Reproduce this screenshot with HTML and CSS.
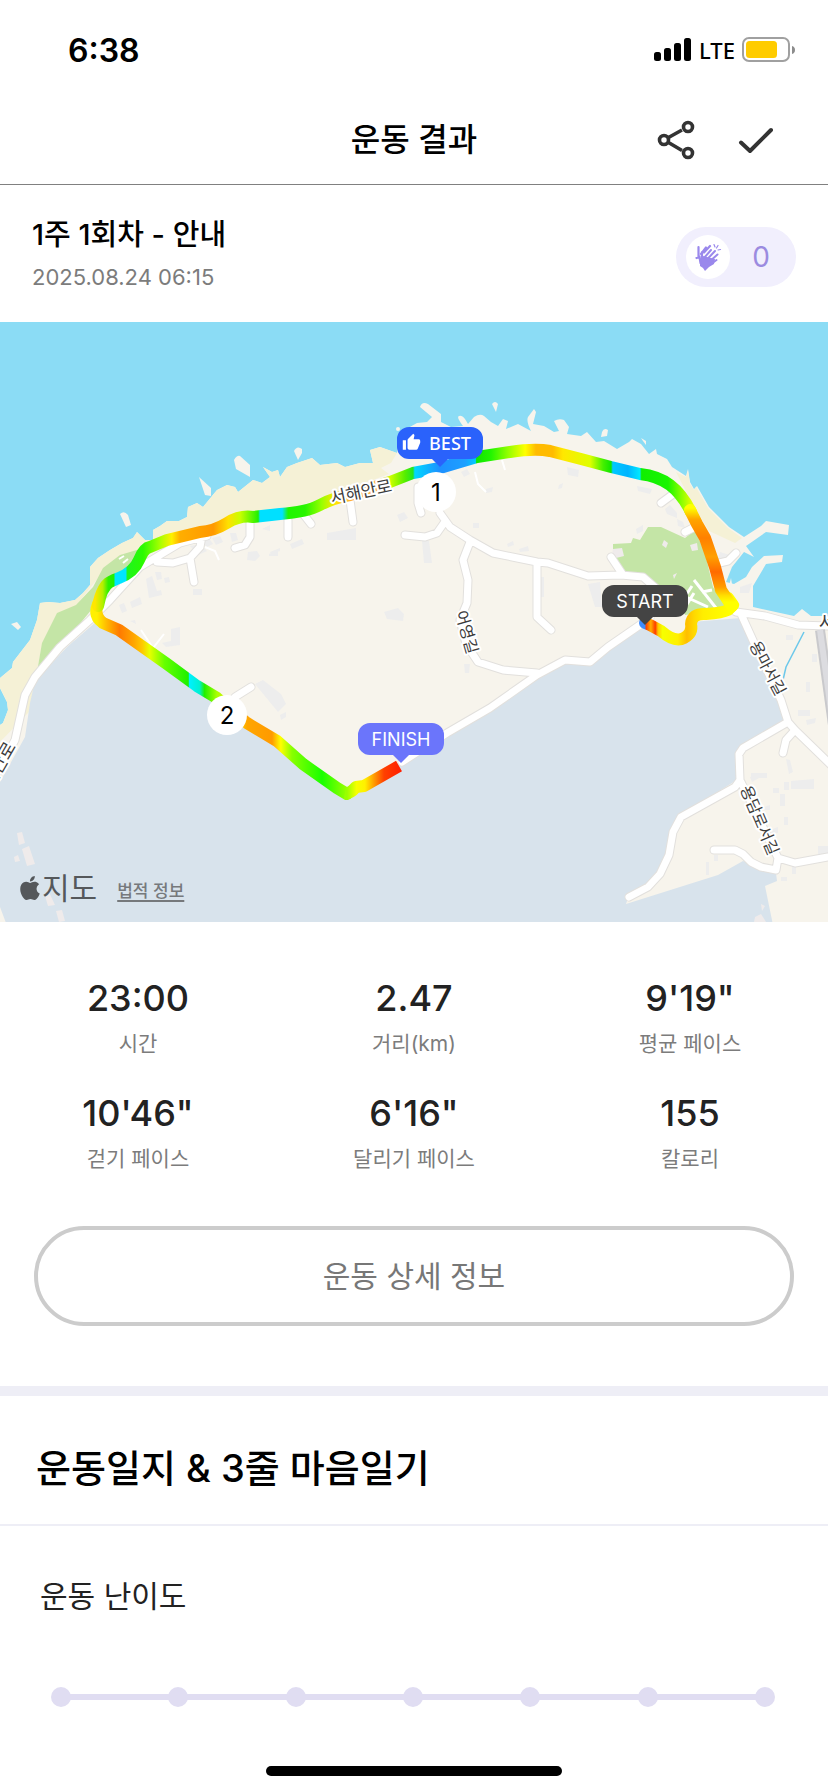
FILE: index.html
```html
<!DOCTYPE html>
<html lang="ko">
<head>
<meta charset="utf-8">
<meta name="viewport" content="width=device-width, initial-scale=1">
<title>운동 결과</title>
<link rel="stylesheet" href="styles.css">
</head>
<body>
<div class="status">
  <span class="time">6:38</span>
  <div class="signals">
    <svg width="38" height="24" viewBox="0 0 38 24" aria-hidden="true"><rect x="0" y="14" width="7" height="9" rx="2.5"/><rect x="10" y="10" width="7" height="13" rx="2.5"/><rect x="20" y="5" width="7" height="18" rx="2.5"/><rect x="30" y="0" width="7" height="23" rx="2.5"/></svg>
    <span class="network">LTE</span>
    <svg width="54" height="26" viewBox="0 0 54 26" aria-hidden="true"><rect x="1" y="1" width="46" height="23" rx="6" fill="#fff" stroke="#a0a0a0" stroke-width="2"/><rect x="4" y="4" width="31" height="17" rx="3.500" fill="#fc0"/><path d="M50 9q3 .8 3 4t-3 4z" fill="#8c8c8c"/></svg>
  </div>
</div>
<header class="bar">
  <h1 class="title">운동 결과</h1>
  <div class="actions">
    <button class="icon-btn" aria-label="공유"><svg width="38" height="40" viewBox="0 0 38 40" fill="none" stroke="#333" stroke-width="3.600"><path d="M11.500 17.500 25 10M11.500 22.500 25 30.500"/><circle cx="7" cy="20" r="4.500"/><circle cx="31" cy="7" r="4.500"/><circle cx="31" cy="33" r="4.500"/></svg></button>
    <button class="icon-btn" aria-label="완료"><svg width="38" height="40" viewBox="0 0 38 40" fill="none" stroke="#333" stroke-width="4" stroke-linecap="round" stroke-linejoin="round"><path d="M4 22.500 13 31 34 10"/></svg></button>
  </div>
</header>
<main>
  <section class="session">
    <div>
      <h2 class="session-name">1주 1회차 - 안내</h2>
      <p class="session-date">2025.08.24 06:15</p>
    </div>
    <button class="clap" aria-label="박수 0">
      <span class="clap-icon"><svg width="28" height="28" viewBox="0 0 28 28" fill="none" stroke="#9a88ec" stroke-linecap="round"><path d="M6 18l3-5 12 3-1 5-5 3-4 4-2-3-3-2z" fill="#9a88ec" stroke="none"/><path d="M4.500 4v10M2.500 15l3-1 1 6M7 11l5-6.500M10 9.500l6-6.500M8 9v8" stroke-width="2.200"/><path d="M10 15l7-8M12.500 17l8.500-9M15 19l8.500-7.500M17 21l5.500-4" stroke-width="2"/><path d="M20 1.500l1 2.500M24 2.500l-1.500 2.500M26.500 6.500 24 7" stroke-width="1.200"/></svg></span>
      <span class="clap-count">0</span>
    </button>
  </section>

  <section class="map" aria-label="지도">
    <svg class="map-canvas" viewBox="0 0 828 600" role="img" aria-label="운동 경로">
      <defs>
        <linearGradient id="north" gradientUnits="userSpaceOnUse" x1="95" y1="0" x2="695" y2="0">
          <stop offset="0" stop-color="#ffe600"/><stop offset=".013" stop-color="#b4f000"/><stop offset=".022" stop-color="#2ff000"/><stop offset=".032" stop-color="#1ef000"/><stop offset=".033" stop-color="#00e5ff"/><stop offset=".052" stop-color="#00e5ff"/><stop offset=".053" stop-color="#1ef51e"/><stop offset=".08" stop-color="#2bfa00"/><stop offset=".108" stop-color="#a6ff00"/><stop offset=".128" stop-color="#fff000"/><stop offset=".142" stop-color="#ffae00"/><stop offset=".197" stop-color="#ff9800"/><stop offset=".222" stop-color="#ffe000"/><stop offset=".242" stop-color="#c8ff00"/><stop offset=".272" stop-color="#22f000"/><stop offset=".275" stop-color="#00e0ff"/><stop offset=".312" stop-color="#00e0ff"/><stop offset=".322" stop-color="#1ef500"/><stop offset=".35" stop-color="#28f500"/><stop offset=".378" stop-color="#99ff00"/><stop offset=".4" stop-color="#ffe600"/><stop offset=".43" stop-color="#ffa640"/><stop offset=".47" stop-color="#ffb040"/><stop offset=".492" stop-color="#ccff00"/><stop offset=".517" stop-color="#55ee00"/><stop offset=".53" stop-color="#22e622"/><stop offset=".533" stop-color="#00d8ff"/><stop offset=".575" stop-color="#1e90ff"/><stop offset=".617" stop-color="#1ea0ff"/><stop offset=".634" stop-color="#00c8ff"/><stop offset=".636" stop-color="#11e600"/><stop offset=".66" stop-color="#22f500"/><stop offset=".69" stop-color="#99ff00"/><stop offset=".717" stop-color="#ffff00"/><stop offset=".735" stop-color="#ffbb00"/><stop offset=".763" stop-color="#ffbb00"/><stop offset=".78" stop-color="#ffe800"/><stop offset=".825" stop-color="#e0ff00"/><stop offset=".847" stop-color="#44f000"/><stop offset=".86" stop-color="#11e600"/><stop offset=".863" stop-color="#00c8ff"/><stop offset=".888" stop-color="#00b4ff"/><stop offset=".908" stop-color="#00e8ff"/><stop offset=".911" stop-color="#11ee00"/><stop offset=".955" stop-color="#18f500"/><stop offset=".977" stop-color="#88ff00"/><stop offset="1" stop-color="#ffff00"/>
        </linearGradient>
        <linearGradient id="east" gradientUnits="userSpaceOnUse" x1="0" y1="186" x2="0" y2="280">
          <stop offset="0" stop-color="#ffff00"/><stop offset=".12" stop-color="#ffa500"/><stop offset=".32" stop-color="#ff8000"/><stop offset=".52" stop-color="#ffa000"/><stop offset=".68" stop-color="#ff6a00"/><stop offset=".84" stop-color="#ff9c00"/><stop offset=".93" stop-color="#ffdd00"/><stop offset="1" stop-color="#ffff00"/>
        </linearGradient>
        <linearGradient id="begin" gradientUnits="userSpaceOnUse" x1="640" y1="0" x2="730" y2="0">
          <stop offset="0" stop-color="#3c8cff"/><stop offset=".05" stop-color="#3c8cff"/><stop offset=".07" stop-color="#ff4400"/><stop offset=".12" stop-color="#ffb000"/><stop offset=".17" stop-color="#ff3c00"/><stop offset=".2" stop-color="#ffc800"/><stop offset=".25" stop-color="#f6ff00"/><stop offset=".42" stop-color="#fff000"/><stop offset=".52" stop-color="#ffbe00"/><stop offset=".6" stop-color="#ffd800"/><stop offset=".7" stop-color="#ffee00"/><stop offset="1" stop-color="#ffff00"/>
        </linearGradient>
        <linearGradient id="west" gradientUnits="userSpaceOnUse" x1="97" y1="0" x2="347" y2="0">
          <stop offset="0" stop-color="#fff000"/><stop offset=".04" stop-color="#ffb800"/><stop offset=".09" stop-color="#ff7a00"/><stop offset=".15" stop-color="#ffa800"/><stop offset=".18" stop-color="#ffc800"/><stop offset=".21" stop-color="#e8ff00"/><stop offset=".27" stop-color="#66ff00"/><stop offset=".365" stop-color="#1ef000"/><stop offset=".37" stop-color="#00f0ff"/><stop offset=".41" stop-color="#00f0d0"/><stop offset=".43" stop-color="#22f000"/><stop offset=".48" stop-color="#aaff00"/><stop offset=".56" stop-color="#ffe000"/><stop offset=".6" stop-color="#ffa600"/><stop offset=".7" stop-color="#ff9a00"/><stop offset=".735" stop-color="#ffff00"/><stop offset=".78" stop-color="#88ff00"/><stop offset=".9" stop-color="#18ff00"/><stop offset="1" stop-color="#99ff00"/>
        </linearGradient>
        <linearGradient id="end" gradientUnits="userSpaceOnUse" x1="347" y1="0" x2="400" y2="0">
          <stop offset="0" stop-color="#99ff00"/><stop offset=".18" stop-color="#f6ff00"/><stop offset=".34" stop-color="#fff000"/><stop offset=".5" stop-color="#ffa000"/><stop offset=".7" stop-color="#ff4000"/><stop offset="1" stop-color="#ff2000"/>
        </linearGradient>
        <clipPath id="frame"><rect width="828" height="600"/></clipPath>
      </defs>
      <g clip-path="url(#frame)">
      <rect width="828" height="600" fill="#8bdcf5"/>
      <rect x="0" y="420" width="828" height="180" class="land"/>
      <path class="land" d="M0 600V403l3-2 5-13-1-8-7-14v-10l12-10 1-6 17-22 7-20 3-17 8-1 12 1 15-3 8-7 7-8V245l8-9 12-8 12-7 11-5 4-6 8 8h8V208l7-4 7-5 12 0 8-4 1-10 9-4 6 4 14-17 10-5 8 2 3 5 15-12 9 3 8-6-7-10 9 5 6-2 2 7 7-10 10-4 15-5 8 7 17-2 8 4 15-4h13l-3-13 10-3 17 6 2-20 18-10 10-1 5-5-12-10q2-6 8-3l13 10v8l10 5 12-1q-7-9-4-10 4-2 9 8l6-7q6-4 10-1l7 6 7 4 5-7 5 2-2 8 12-5 13 7q-5-10-3-14l6-8 2 3-3 12 11 2 10 6 5-1-5-10q5-3 10-1l5 7-2 7 14 2 6-4 9 10 8-1 13 8 12-7 3-3 9 5 8 10 7-5 1 5 10 5 5 8 14 9 2-7 2 13 4 7 3-3 12 21 20 20 15 10 17-11 5-5 23 4-1 10-22-3-20 14 8 11-10-5-12 15-6 15 8 2 12-7 6-10 12-11 19-1-1 7-16 2-13 22v21l41 9 8-7 9 7h18v305z"/>
      <g class="land"><path d="M234 138q3-5 6-4l10 9v12l-14-8z"/><path d="M199 155l12 11v8l-6-1z"/><path d="M120 192q4-4 8 1l3 10-5 2z"/><path d="M294 129q3-6 8-2v4l-4 7z"/><path d="M492 82q3-4 6 0l-2 8z"/><path d="M602 110q2-5 6-2l-1 6-6 1z"/><path d="M641 116l5 3v4l-3-4z"/><path d="M11 302l6-2 4 5-3 3z"/><circle cx="398" cy="107" r="2"/><path d="M731 256l2 12-3 2-1-6z"/></g>
      <path class="sand" d="M0 420V403l3-2 5-13-1-8-7-14v-10l12-10 1-6 17-22 7-20 3-17 8-1 12 1 15-3 8-7 7-8V245l8-9 12-8 12-7 11-5 4-6 8 8h8V208l7-4 7-5 12 0 8-4 1-10 9-4 6 4 14-17 10-5 8 2 3 5 15-12 9 3 8-6-7-10 9 5 6-2 2 7 7-10 10-4 15-5 8 7 17-2 8 4 15-4h13l-3-13 10-3 17 6-6 10-10 5 8 6-40 15-65 22-90 19-56 20-40 28-57 72-12 62z"/>
      <path class="sand" d="M676 150l10 5 2-6 2 13 4 6 2-3 12 21 20 20 14 10-7 5-26-12-18-30z"/>
      <path class="green" d="M37 350l5-29 15-30 19-8 17-18 10-19 17-13 20-6-5 14-43 46-18 22z"/>
      <path class="green" d="M613 222l18-1 2-5 7 2 8-13h13l24 11 10-8 10 23 8 34 15 22-20 3-23 3-5-24-22-5-10-9-25-5-10-15z"/>
      <path class="airport" d="M6 601 0 585V460l25-45 5-34 5-22 32-34 30-26 40 20 110 81 100 72 55-32 45-28 43-25 47-33 28-15 25 2 18-15 37-24 30 20 16-22 50-4 40 80 7 22-47 28-1 30-59 37-10 36-23 34-20 13-2 6 92-29 25-14 33 12 1 8-12 5 8 39z"/>
      <g fill="#ededed">
        <path d="M146 257l6-3 5 15 4-1 1 5-13 3z"/><path d="M130 280l10-5 2 7-10 4zM119 283l5-2 3 8-5 2zM155 250h6l1 7-5 1zM164 256l5-1 1 5-5 1zM193 267h9v6h-9z"/>
        <path d="M190 224l11-2 6 7-9 4zM201 219l7-4 5 7-6 3zM212 216l8-2 3 6-7 3zM230 211h6l2 7-6 2zM248 230l9-1 3 5-5 5-8-1zM269 232l9-4v6h-9zM262 207l8-4v6z"/>
        <path d="M327 211l29-5v12h-29zM290 222l12-5 2 5-12 5zM270 230l10-4v3l-9 3zM422 219h7l3 22h-8zM397 193l7-3 4 6-8 4zM461 150l6-3 3 5-6 3zM486 167l7-2-1 5-6 1zM473 201h6v5h-6zM507 222l6-3 1 4-6 2zM519 227l9-3 1 5-9 1zM384 290l14-4 6 6-1 7-16-2zM538 255h6v20h-6z"/>
        <path d="M567 145l12 3-1 7-10-2zM559 163l4-2-1 5-4 1zM637 164l15 3-2 5-12-3zM665 187l5-4 7 8 0 5-10-4zM677 197l6 3 2 6-7-2zM636 207l7-4v6l-6 3zM588 262l12-2 2 25h-7zM720 230l10 3-5 6-7-2zM740 265l12-4-3 10h-9z"/>
        <path d="M171 307l9-2v18l-14 2-4-4 9-2zM255 362l8-4 18 14 5 10-8 8zM280 393l6-3v5l-5 3zM130 299l5-1 1 4zM464 342h6l-1 9h-4zM505 350h14v3h-14z"/>
        <path d="M798 388h12v6h-12zM806 398l10-2-1 5-8 2zM786 313h7v5h-7zM750 455l9-3v4l-7 4zM773 466h6v5h-6zM786 437l4 1 3 12-4 2zM751 451h16v5h-16zM784 460h5v8h-5zM791 459l23-2v10h-23zM780 472h5v12h-5zM764 485l6-2v5h-5zM770 508l8-3v6h-8zM784 495h4v8h-4zM706 540h3v13h-3zM714 533h4v6h-4zM792 540h4v12h-4zM781 555h6v4h-6zM818 524h10v12h-10zM806 360h4v10h-4zM812 332h5v8h-5z"/>
      </g>
      <g fill="#efebeb"><path d="M17 511l5-1 3 11-6 2zM22 527l7-3 6 18-8 2zM14 535l4-2 2 6-5 1zM48 568l7 15-7 1-3-10zM56 589l6-1 3 11-6 1zM613 227l9-1 2 8-8 2-4-3zM664 218l4 3-2 5-4-3zM690 223l7-2 1 7-6 1zM673 253l4-2-3 6z M761 582l4 2-3 5zM755 595l6-3 5 8h-12z"/></g>
      <defs><path id="streets" d="M-2 450 15 418 25 373 35 355 60 325 90 298M402 440 447 411 490 386 537 353 565 338 590 340 608 325 650 296M736 290 765 294 798 303 828 304M741 292 756 325 781 378 788 400 795 408 832 444M788 400 743 426 739 432 740 458 735 465 681 495 673 510 669 533 660 552 648 565 629 575M741 460 778 536 795 541 828 535M778 536 776 548 761 545 751 540 743 532 735 528 714 528M795 408 786 418 783 431M440 191 450 205 470 218 493 231 537 240 548 241 588 254 621 253 643 255 658 268M444 201 437 211 425 215 405 213M470 220 463 238 468 258 467 281 460 298 466 322 478 340 503 348 537 351M537 243V295L551 308M611 235 623 253M418 165v16l3 10M288 198v17M304 193l7 9M350 178l3 22M90 298 110 278 140 245 180 221 207 214M157 240 173 241 190 236 200 225 202 214M190 236l4 24M250 200v15l-5 8-10 3M661 181l15-11M685 210l12-6M736 231l-8 8-13 3M235 375l16-10"/></defs>
      <use href="#streets" class="casing"/>
      <use href="#streets" class="road"/>
      <g fill="none" stroke="#fff" stroke-width="3"><path d="M141 308l12 18 11-14M119 237l5-3M123 241l5-4M475 150l3 12 8 8M502 138l3 10M205 225l10 4 4 9" stroke-width="2"/><path d="M694 258l22 28M686 275l22 10M692 264l-8 12M702 270l10-2M684 287l10-16"/></g>
      <path d="M820 308 836 425" stroke="#c9c9cc" stroke-width="10" fill="none"/><path d="M820 308 836 425" stroke="#dcdce0" stroke-width="6" fill="none"/>
      <path d="M804 310 786 345 783 358" stroke="#6cc8ea" stroke-width="1.500" fill="none"/>
      <g class="route">
        <path stroke="url(#begin)" d="M645 301 650 303 661 309Q675 321 684 316T691 302Q692 291 706 292 722 291 728 288L733 283 728 276"/>
        <path stroke="url(#west)" d="M98 282Q93 294 103 301L119 308 143 325 167 342 197 364 217 376 247 401 277 419 303 442 337 466 347 472"/>
        <path stroke="url(#end)" stroke-linecap="butt" d="M345 471Q350 472 356 465L364 464 399 444"/>
        <path stroke="url(#north)" d="M98 284Q102 264 110 260T119 256Q134 250 139 238T150 225L167 218 200 210Q214 209 227 201T253 195L280 192Q307 190 320 183T350 173L390 160 413 151 440 146 477 135 510 130Q535 126 550 129L581 137 611 145 640 152Q658 154 670 163T691 190"/>
        <path stroke="url(#east)" d="M690 188 697 202 705 216 715 245 721 268 729 280 732 284"/>
      </g>
      <g class="street">
        <text transform="translate(361 170) rotate(-12)" dy="6" font-size="17">서해안로</text>
        <text transform="translate(467 310) rotate(74)" dy="6">어영길</text>
        <text transform="translate(768 346) rotate(62)" dy="6">용마서길</text>
        <text transform="translate(760 498) rotate(67)" dy="6">용담로서길</text>
        <text transform="translate(-1 443) rotate(-60)" dy="6" font-size="18">해안로</text>
        <text x="827" y="307" font-size="18">서</text>
      </g>
      <circle cx="436" cy="170" r="20" fill="#fff"/><circle cx="227" cy="393" r="20" fill="#fff"/>
      <g class="km"><text x="436" y="179">1</text><text x="227" y="402">2</text></g>
      <path fill="#2a62fb" d="M409 105h62a12 12 0 0 1 12 12v8a12 12 0 0 1-12 12h-23l-8 8-8-8h-23a12 12 0 0 1-12-12v-8a12 12 0 0 1 12-12z"/>
      <path fill="#444" d="M614 263h62a12 12 0 0 1 12 12v8a12 12 0 0 1-12 12h-23l-8 8-8-8h-23a12 12 0 0 1-12-12v-8a12 12 0 0 1 12-12z"/>
      <path fill="#6b75fb" d="M370 401h62a12 12 0 0 1 12 12v8a12 12 0 0 1-12 12h-23l-8 8-8-8h-23a12 12 0 0 1-12-12v-8a12 12 0 0 1 12-12z"/>
      <svg x="402" y="111" width="19" height="19" viewBox="0 0 24 24"><path fill="#fff" d="M1 21h4V9H1v12zm22-11c0-1.100-.9-2-2-2h-6.310l.95-4.570.03-.32c0-.41-.17-.79-.44-1.060L14.170 1 7.590 7.590C7.220 7.950 7 8.450 7 9v10c0 1.100.9 2 2 2h9c.83 0 1.540-.5 1.840-1.220l3.020-7.050c.09-.23.14-.47.14-.73v-2z"/></svg>
      <g class="tag"><text x="450" y="128" class="best">BEST</text><text x="645" y="286">START</text><text x="401" y="424">FINISH</text></g>
      </g>
    </svg>
    <div class="credit">
      <span class="maps"><svg width="20" height="24" viewBox="2 0 20 24" aria-hidden="true"><path fill="#55585b" d="M12.152 6.896c-.948 0-2.415-1.078-3.960-1.040-2.040.027-3.910 1.183-4.961 3.014-2.117 3.675-.546 9.103 1.519 12.090 1.013 1.454 2.208 3.090 3.792 3.039 1.520-.065 2.090-.987 3.935-.987 1.831 0 2.350.987 3.960.948 1.637-.026 2.676-1.480 3.676-2.948 1.156-1.688 1.636-3.325 1.662-3.415-.039-.013-3.182-1.221-3.220-4.857-.026-3.040 2.480-4.494 2.597-4.559-1.429-2.090-3.623-2.324-4.390-2.376-2-.156-3.675 1.090-4.610 1.090zM15.530 3.830c.843-1.012 1.400-2.427 1.245-3.830-1.207.052-2.662.805-3.532 1.818-.78.896-1.454 2.338-1.273 3.714 1.338.104 2.715-.688 3.559-1.701"/></svg>지도</span>
      <a class="legal" href="#">법적 정보</a>
    </div>
  </section>

  <dl class="stats">
    <div class="stat"><dt>시간</dt><dd>23:00</dd></div>
    <div class="stat"><dt>거리(km)</dt><dd>2.47</dd></div>
    <div class="stat"><dt>평균 페이스</dt><dd>9'19"</dd></div>
    <div class="stat"><dt>걷기 페이스</dt><dd>10'46"</dd></div>
    <div class="stat"><dt>달리기 페이스</dt><dd>6'16"</dd></div>
    <div class="stat"><dt>칼로리</dt><dd>155</dd></div>
  </dl>
  <div class="detail"><button class="detail-btn">운동 상세 정보</button></div>

  <section class="journal">
    <h2 class="journal-title">운동일지 &amp; 3줄 마음일기</h2>
    <fieldset class="level">
      <legend class="level-title">운동 난이도</legend>
      <div class="level-track">
        <input type="radio" name="level" aria-label="난이도 1"><input type="radio" name="level" aria-label="난이도 2"><input type="radio" name="level" aria-label="난이도 3"><input type="radio" name="level" aria-label="난이도 4"><input type="radio" name="level" aria-label="난이도 5"><input type="radio" name="level" aria-label="난이도 6"><input type="radio" name="level" aria-label="난이도 7">
      </div>
    </fieldset>
  </section>
</main>
<div class="home"></div>
</body>
</html>
```
FILE: styles.css
```css
* { box-sizing: border-box; }
body, h1, h2, p, dl, dd, fieldset { margin: 0; padding: 0; }
body {
  min-height: 100vh;
  display: flex;
  flex-direction: column;
  background: #fff;
  color: #000;
  font-family: Inter, "Noto Sans CJK KR", sans-serif;
}
button { margin: 0; padding: 0; border: 0; background: none; font: inherit; }
svg { display: block; }

.status {
  height: 100px;
  padding: 0 32px 0 68px;
  display: flex;
  align-items: center;
  justify-content: space-between;
}
.time { font-size: 32px; font-weight: 600; }
.signals { display: flex; align-items: center; gap: 7px; }
.network { font-size: 22px; font-weight: 500; font-family: "Noto Sans", sans-serif; }

.bar {
  height: 85px;
  padding: 0 53px 4px;
  display: grid;
  grid-template-columns: 1fr auto 1fr;
  align-items: center;
  border-bottom: 1px solid #808080;
}
.title { grid-column: 2; font-size: 32px; line-height: 48px; font-weight: 500; }
.actions { display: flex; justify-content: flex-end; gap: 42px; }

.session {
  height: 137px;
  padding: 0 32px;
  display: flex;
  align-items: center;
  justify-content: space-between;
}
.session-name { font-size: 29px; line-height: 40px; font-weight: 500; }
.session-date { padding-top: 6px; font-size: 22px; line-height: 32px; color: #7c7c7c; }
.clap {
  width: 120px;
  height: 60px;
  margin-top: 6px;
  padding: 0 10px;
  display: flex;
  align-items: center;
  border-radius: 30px;
  background: #f1effd;
}
.clap-icon {
  width: 44px;
  height: 44px;
  display: grid;
  place-items: center;
  border-radius: 50%;
  background: #fff;
}
.clap-count { flex: 1; padding-left: 6px; font-size: 28px; color: #9b8be0; }

.map { position: relative; }
.map-canvas { width: 100%; height: auto; }
.land { fill: #f7f4ec; }
.sand { fill: #f5f1d6; }
.green { fill: #c4e5a6; }
.airport { fill: #d8e3ec; }
.casing, .road, .route { fill: none; stroke-linecap: round; stroke-linejoin: round; }
.casing { stroke: #e2e0dd; stroke-width: 9px; }
.road { stroke: #fff; stroke-width: 7px; }
.route { stroke-width: 12px; }
.street text {
  font-family: "Noto Sans CJK KR", sans-serif;
  text-anchor: middle;
  fill: #3c3c3c;
  stroke: #fff;
  stroke-width: 4px;
  stroke-linejoin: round;
  paint-order: stroke;
}
.street { font-size: 16px; }
.km { font-size: 24px; text-anchor: middle; }
.tag { font-size: 18px; font-weight: 400; fill: #fff; text-anchor: middle; }
.best { font-family: "Noto Sans", sans-serif; font-weight: 500; }
.credit {
  position: absolute;
  left: 20px;
  bottom: 14px;
  display: flex;
  align-items: center;
  gap: 20px;
  color: #55585b;
}
.maps { display: flex; align-items: center; gap: 2px; font-size: 30px; line-height: 40px; }
.legal { padding-top: 3px; color: #76797c; font-size: 17px; font-weight: 500; text-underline-offset: 3px; text-decoration-thickness: 2px; }

.stats {
  padding: 52px 0 46px;
  display: grid;
  grid-template-columns: repeat(3, 1fr);
  row-gap: 24px;
  text-align: center;
}
.stat { display: flex; flex-direction: column-reverse; }
.stat dd { font-size: 36px; line-height: 48px; font-weight: 500; color: #222; }
.stat dt { font-size: 21px; line-height: 43px; color: #7c7c7c; }

.detail { padding: 0 34px 60px; }
.detail-btn {
  width: 100%;
  height: 100px;
  padding-bottom: 4px;
  border: 4px solid #ccc;
  border-radius: 50px;
  font-size: 30px;
  color: #777;
}

.journal { border-top: 10px solid #eeeef6; }
.journal-title {
  padding: 44px 36px 28px;
  border-bottom: 2px solid #eeeef6;
  font-size: 38px;
  line-height: 56px;
  font-weight: 500;
}
.level { border: 0; padding: 48px 53px 40px 51px; }
.level-title { float: left; margin: 0 0 69px -11px; padding: 0; font-size: 30px; line-height: 44px; color: #222; }
.level-track {
  clear: both;
  display: flex;
  justify-content: space-between;
  background: linear-gradient(#e0ddf2, #e0ddf2) center / calc(100% - 12px) 6px no-repeat;
}
.level-track input {
  appearance: none;
  width: 20px;
  height: 20px;
  margin: 0;
  border-radius: 50%;
  background: #e0ddf2;
}
.home {
  width: 296px;
  height: 10px;
  margin: auto auto 16px;
  border-radius: 5px;
  background: #000;
}
```
